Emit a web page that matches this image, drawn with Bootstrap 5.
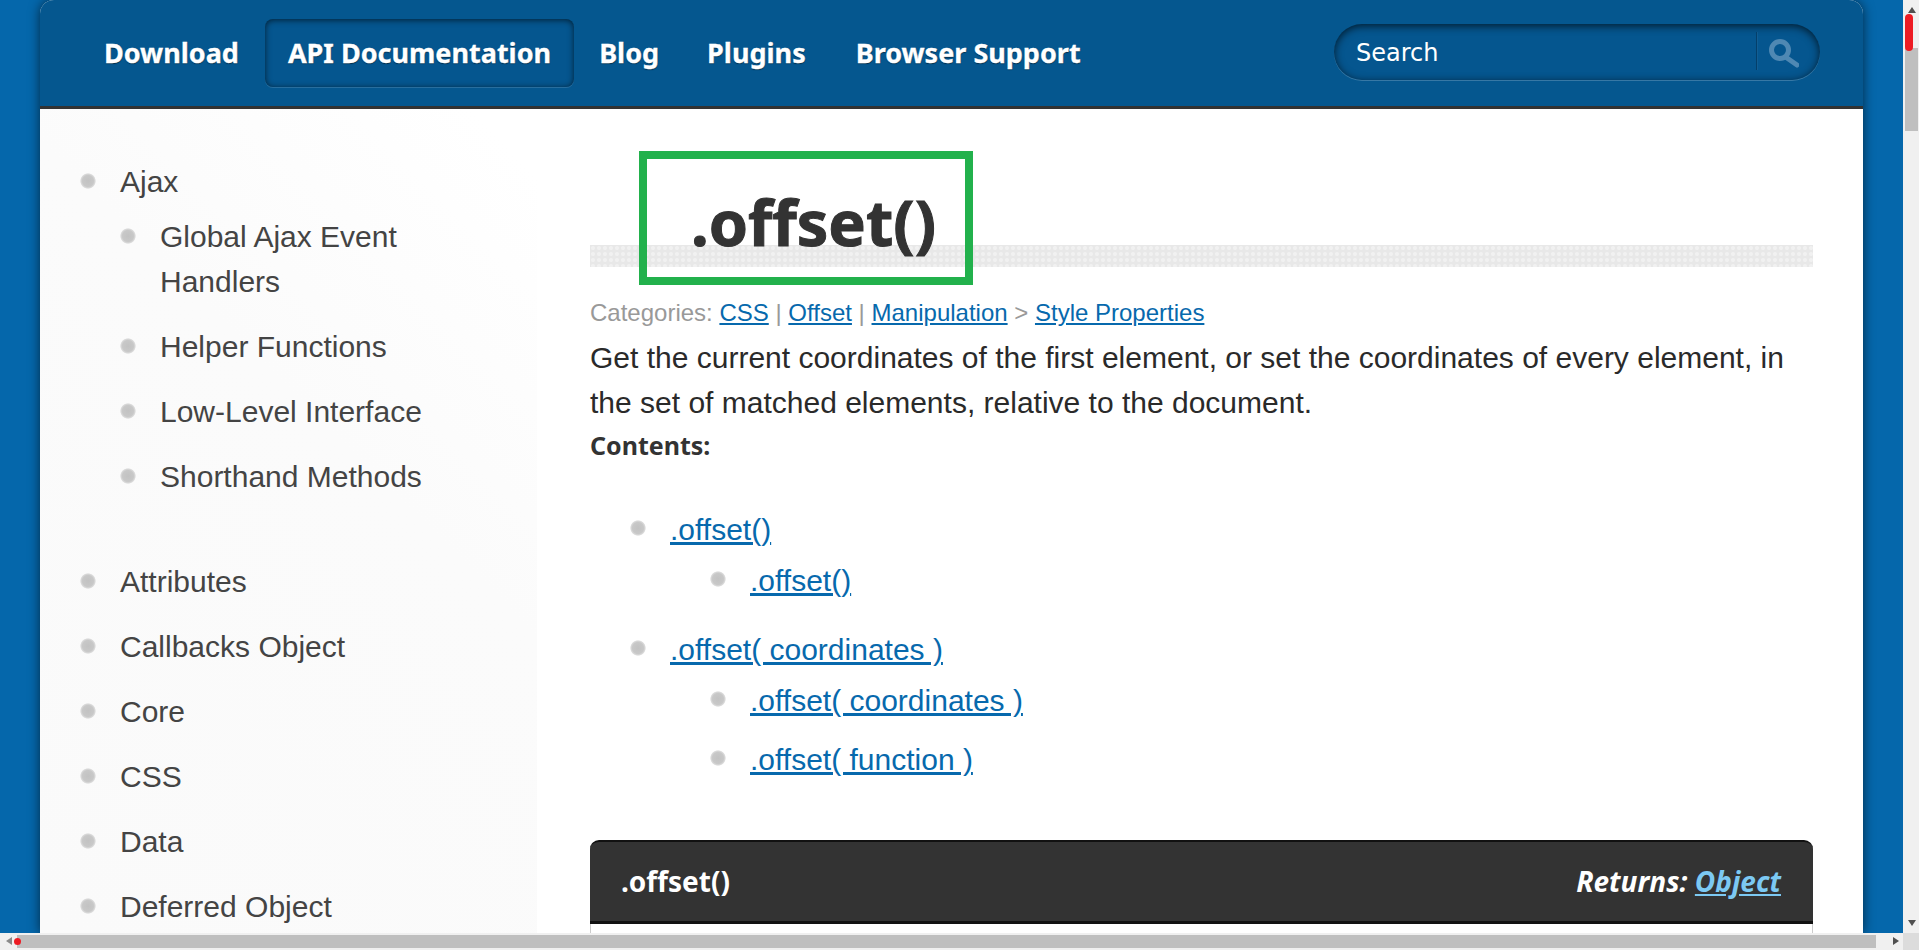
<!DOCTYPE html>
<html lang="en"><head><meta charset="utf-8"><title>.offset()</title>
<link href="https://cdn.jsdelivr.net/npm/bootstrap@5.3.0/dist/css/bootstrap.min.css" rel="stylesheet">
<style>
html,body{height:950px;overflow:hidden}
body{background:#0567ab;font:30px/45px "Liberation Sans",Arial,sans-serif;color:#2a2a2a}
a{color:#0769ad}
.viewport-row{height:933px}
.page-area{width:1903px;overflow:hidden;padding:0 40px}
.sheet{width:1823px;height:100%;background:#fff;box-shadow:0 0 12px rgba(0,0,0,.6);border-radius:14px 14px 0 0}
.topbar{height:109px;background:#05578f;border-bottom:3px solid #333;border-radius:14px 14px 0 0;padding:19px 43px 0 40px}
.topbar a{font:bold 27px/68px "Noto Sans",sans-serif;color:#fff;text-decoration:none;padding:0 24px;height:68px;display:block;text-shadow:0 1px 1px rgba(0,0,0,.5);-webkit-text-stroke:.3px #fff}
.topbar a.current{background:#05568f;border-radius:8px;box-shadow:inset 0 1px 6px rgba(0,0,0,.65),0 1px 0 rgba(255,255,255,.14);padding:0 23px;margin-left:2px;margin-right:1px}
.topbar a:last-child{margin-left:2px}
.searchbox{width:486px;height:56px;margin-top:5px;border-radius:28px;background:#05568f;box-shadow:inset 0 2px 8px rgba(0,0,0,.7),0 1px 0 rgba(255,255,255,.2);padding-left:22px;color:#fff;font:24px/58px "DejaVu Sans",sans-serif}
.searchbox .divider{width:1px;height:38px;margin-top:8px;background:#043f6a;box-shadow:1px 0 0 rgba(255,255,255,.05)}
.searchbox svg{margin:15px 21px 0 12px}
.sidebar{width:497px;flex:none;background:linear-gradient(45deg,#fafafa,#fbfbfb 60%,#fff 95%);padding:50px 0 0 40px;color:#444}
.dotlist,.dotlist ul{list-style:none;margin:0;padding:0}
.dotlist li{padding-left:40px;background:radial-gradient(closest-side,#c2c2c2 0,#c8c8c8 70%,#dcdcdc 90%,rgba(255,255,255,0) 100%) no-repeat 0 14px/16px 16px;margin-bottom:20px}
.dotlist ul{margin:10px 0 0;padding-bottom:20px}
.docs{flex:1;min-width:0;padding:0 50px 0 53px}
.headline-wrap{height:159px;position:relative}
.hatch-band{position:absolute;left:0;right:0;top:136px;height:22px;background:radial-gradient(circle,#f1f1f1 1.5px,#e8e8e8 2.5px) 0 0/6px 6px}
.headline{position:absolute;left:101px;top:65px;margin:0;font:bold 63px/96px "Noto Sans",sans-serif;color:#333;-webkit-text-stroke:1px #333}
.callout{position:absolute;left:49px;top:42px;width:334px;height:134px;border:8px solid #22b14c}
.crumbs{font-size:24px;line-height:30px;color:#999;margin-top:30px}
.intro{margin:7px 0 0;line-height:45px}
.contents-label{font:bold 25px/40px "Noto Sans",sans-serif;color:#333;margin:0}
.toc{margin:42px 0 0 40px}
.toc li{margin-bottom:24px;background-position:0 13px}
.toc ul{margin:6px 0 0 40px;padding-bottom:0}
.toc ul li{margin-bottom:14px}
.sigbar{margin-top:58px;height:84px;background:#333;border-top:2px solid #111;border-bottom:3px solid #111;border-radius:9px 9px 0 0;padding:0 32px 0 31px;color:#fff;font:bold 28px/78px "Noto Sans",sans-serif}
.sigbar em a{color:#7cc9f3}
.sigbody{height:20px;border:solid #ccc;border-width:0 1px}
.vscroll{width:16px;background:#f0f0f0;position:relative}
.hscroll{height:17px;background:#f0f0f0;position:relative}
.sb-thumb{position:absolute;background:#bfbfbf}
.sb-mark{position:absolute;background:#ed1c24;border-radius:4px}
.sb-arrow{position:absolute;width:0;height:0;border:4px solid transparent}
.vthumb{left:2px;top:48px;width:13px;height:83px}
.vmark{left:2px;top:14px;width:8px;height:37px}
.varrow-up{left:5px;top:3px;border-bottom:6px solid #505050}
.varrow-down{left:5px;top:920px;border-top:6px solid #505050}
.hthumb{left:17px;top:2px;width:1859px;height:13px}
.hmark{left:14px;top:5px;width:7px;height:7px;border-radius:50%}
.harrow-left{left:2px;top:4px;border-right:6px solid #8a8a8a}
.harrow-right{left:1893px;top:4px;border-left:6px solid #505050}
.sb-corner{width:16px;background:#dcdcdc;position:absolute;right:0;top:0;height:17px}
</style></head>
<body>
<div class="d-flex viewport-row">
  <div class="page-area">
    <div class="sheet d-flex flex-column">
      <div class="topbar d-flex justify-content-between flex-shrink-0">
        <nav class="d-flex">
          <a href="#">Download</a>
          <a href="#" class="current">API Documentation</a>
          <a href="#">Blog</a>
          <a href="#">Plugins</a>
          <a href="#">Browser Support</a>
        </nav>
        <div class="searchbox d-flex">
          <div class="flex-grow-1">Search</div>
          <div class="divider"></div>
          <svg width="30" height="30" viewBox="0 0 30 30" fill="none" stroke="#4f88b3" stroke-linecap="round"><circle cx="11" cy="11" r="8.5" stroke-width="5"/><path d="M18 19l10 7" stroke-width="5"/></svg>
        </div>
      </div>
      <div class="d-flex flex-grow-1 overflow-hidden">
        <aside class="sidebar">
          <ul class="dotlist">
            <li>Ajax
              <ul>
                <li>Global Ajax Event<br>Handlers</li>
                <li>Helper Functions</li>
                <li>Low-Level Interface</li>
                <li>Shorthand Methods</li>
              </ul>
            </li>
            <li>Attributes</li>
            <li>Callbacks Object</li>
            <li>Core</li>
            <li>CSS</li>
            <li>Data</li>
            <li>Deferred Object</li>
          </ul>
        </aside>
        <main class="docs">
          <div class="headline-wrap">
            <div class="hatch-band"></div>
            <h1 class="headline">.offset()</h1>
            <div class="callout"></div>
          </div>
          <div class="crumbs">Categories: <a href="#">CSS</a> | <a href="#">Offset</a> | <a href="#">Manipulation</a> &gt; <a href="#">Style Properties</a></div>
          <p class="intro">Get the current coordinates of the first element, or set the coordinates of every element, in the set of matched elements, relative to the document.</p>
          <p class="contents-label">Contents:</p>
          <ul class="dotlist toc">
            <li><a href="#">.offset()</a>
              <ul><li><a href="#">.offset()</a></li></ul>
            </li>
            <li><a href="#">.offset( coordinates )</a>
              <ul>
                <li><a href="#">.offset( coordinates )</a></li>
                <li><a href="#">.offset( function )</a></li>
              </ul>
            </li>
          </ul>
          <div class="sigbar d-flex justify-content-between">
            <span>.offset()</span>
            <em>Returns: <a href="#">Object</a></em>
          </div>
          <div class="sigbody"></div>
        </main>
      </div>
    </div>
  </div>
  <div class="vscroll flex-shrink-0">
    <span class="sb-arrow varrow-up"></span>
    <span class="sb-thumb vthumb"></span>
    <span class="sb-mark vmark"></span>
    <span class="sb-arrow varrow-down"></span>
  </div>
</div>
<div class="hscroll">
  <span class="sb-arrow harrow-left"></span>
  <span class="sb-thumb hthumb"></span>
  <span class="sb-mark hmark"></span>
  <span class="sb-arrow harrow-right"></span>
  <span class="sb-corner"></span>
</div>
<script src="https://cdn.jsdelivr.net/npm/bootstrap@5.3.0/dist/js/bootstrap.bundle.min.js"></script>
</body></html>
